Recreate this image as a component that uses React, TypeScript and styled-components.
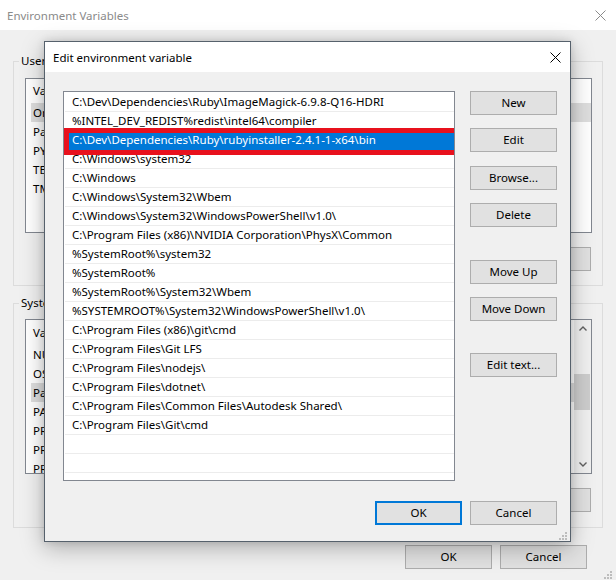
import React from "react";
import styled, { createGlobalStyle } from "styled-components";

const GlobalStyle = createGlobalStyle`
  html, body { margin: 0; padding: 0; background: #f0f0f0; }
  body {
    font-family: "Noto Sans", "Open Sans", sans-serif;
    font-size: 11.5px;
    color: #000;
  }
  *, *::before, *::after { box-sizing: border-box; }
`;

const Screen = styled.div`
  position: relative;
  width: 616px;
  height: 580px;
  overflow: hidden;
  display: flex;
  flex-direction: column;
`;

/* ---------- background window ---------- */

const BgTitleBar = styled.div`
  flex: none;
  height: 30px;
  background: #fff;
  display: flex;
  align-items: center;
  justify-content: space-between;
  padding: 0 10px 0 7px;
  color: #8a8a8a;
`;

const BgBody = styled.div`
  position: relative;
  flex: 1;
  background: #f0f0f0;
  padding: 31px 13px 0;
  display: flex;
  flex-direction: column;
`;

const Group = styled.div<{ $mt: number; $pt: number; $pb: number }>`
  position: relative;
  flex: none;
  height: 225px;
  margin-top: ${(p) => p.$mt}px;
  padding: ${(p) => p.$pt}px 10px ${(p) => p.$pb}px 11px;
  border: 1px solid #dcdcdc;
  display: flex;
  flex-direction: column;
`;

const GroupLabel = styled.span`
  position: absolute;
  top: -9px;
  left: 5px;
  padding: 0 2px;
  line-height: 16px;
  background: #f0f0f0;
`;

const ListView = styled.div`
  flex: none;
  height: 155px;
  border: 1px solid #828790;
  background: #fff;
  display: flex;
  overflow: hidden;
`;

const ListColumn = styled.div`
  flex: 1;
  display: flex;
  flex-direction: column;
  padding-left: 5px;
  overflow: hidden;
`;

const ListHeader = styled.div<{ $h: number }>`
  flex: none;
  height: ${(p) => p.$h}px;
  line-height: ${(p) => p.$h}px;
  padding-left: 2px;
  white-space: nowrap;
`;

const ListRow = styled.div<{ $selected?: boolean }>`
  flex: none;
  height: 19px;
  line-height: 19px;
  padding-left: 2px;
  white-space: nowrap;
  background: ${(p) => (p.$selected ? "#dedede" : "transparent")};
`;

const Scrollbar = styled.div`
  flex: none;
  width: 17px;
  background: #f0f0f0;
  display: flex;
  flex-direction: column;
`;

const ScrollArrow = styled.div`
  flex: none;
  height: 17px;
  display: flex;
  align-items: center;
  justify-content: center;
`;

const ScrollTrack = styled.div`
  flex: 1;
  padding: 37px 1px 0 0;
`;

const ScrollThumb = styled.div`
  height: 36px;
  background: #cdcdcd;
`;

const ButtonRow = styled.div<{ $mt: number; $pr: number }>`
  display: flex;
  justify-content: flex-end;
  gap: 8px;
  margin-top: ${(p) => p.$mt}px;
  padding-right: ${(p) => p.$pr}px;
`;

const Button = styled.button<{ $default?: boolean; $mt?: number }>`
  flex: none;
  width: 87px;
  height: 24px;
  margin-top: ${(p) => p.$mt ?? 0}px;
  padding: 0;
  background: #e1e1e1;
  border: ${(p) => (p.$default ? "2px solid #0078d7" : "1px solid #adadad")};
  font-family: inherit;
  font-size: 11.5px;
  color: #000;
  line-height: 20px;
  text-align: center;
`;

const Grip = styled.svg<{ $right: number; $bottom: number }>`
  position: absolute;
  right: ${(p) => p.$right}px;
  bottom: ${(p) => p.$bottom}px;
`;

/* ---------- edit dialog ---------- */

const Dialog = styled.div`
  position: absolute;
  left: 44px;
  top: 41px;
  width: 527px;
  height: 501px;
  border: 1px solid #56616c;
  background: #f0f0f0;
  display: flex;
  flex-direction: column;
  box-shadow: 0 6px 22px rgba(0, 0, 0, 0.28), 0 0 8px rgba(0, 0, 0, 0.12);
`;

const DialogTitleBar = styled.div`
  flex: none;
  height: 30px;
  background: #fff;
  display: flex;
  align-items: center;
  justify-content: space-between;
  padding: 0 9px 0 8px;
`;

const DialogBody = styled.div`
  position: relative;
  flex: 1;
  padding: 19px 13px 16px 18px;
  display: flex;
  flex-direction: column;
`;

const DialogContent = styled.div`
  flex: none;
  height: 390px;
  display: flex;
  gap: 15px;
`;

const PathList = styled.div`
  flex: none;
  width: 392px;
  height: 390px;
  border: 1px solid #828790;
  background: #fff;
  padding: 1px 0 0 1px;
  overflow: hidden;
  display: flex;
  flex-direction: column;
`;

const PathRow = styled.div<{ $selected?: boolean }>`
  position: relative;
  flex: none;
  height: 19px;
  line-height: 18px;
  padding-left: 7px;
  white-space: nowrap;
  border-bottom: 1px solid ${(p) => (p.$selected ? "#0078d7" : "#ececec")};
  background: ${(p) => (p.$selected ? "#0078d7" : "transparent")};
  color: ${(p) => (p.$selected ? "#fff" : "#000")};

  ${(p) =>
    p.$selected &&
    `
    &::after {
      content: "";
      position: absolute;
      left: -1px;
      top: -3px;
      width: 395px;
      height: 27px;
      border: 5px solid #e8111d;
      pointer-events: none;
    }
  `}
`;

const ButtonColumn = styled.div`
  flex: none;
  width: 87px;
  display: flex;
  flex-direction: column;
`;

const DialogFooter = styled.div`
  flex: none;
  margin-top: 20px;
  display: flex;
  justify-content: flex-end;
  gap: 8px;
`;

/* ---------- icons ---------- */

const CloseIcon = ({ color }: { color: string }) => (
  <svg width="11" height="11" viewBox="0 0 11 11">
    <path d="M0.5 0.5 L10.5 10.5 M10.5 0.5 L0.5 10.5" stroke={color} strokeWidth="1" fill="none" />
  </svg>
);

const Chevron = ({ up }: { up: boolean }) => (
  <svg width="8" height="5" viewBox="0 0 8 5">
    <path
      d={up ? "M0.5 4.5 L4 1 L7.5 4.5" : "M0.5 0.5 L4 4 L7.5 0.5"}
      stroke="#606060"
      strokeWidth="1.4"
      fill="none"
    />
  </svg>
);

const GripDots = ({ right, bottom }: { right: number; bottom: number }) => (
  <Grip $right={right} $bottom={bottom} width="8" height="8" viewBox="0 0 8 8">
    {[
      [6, 0],
      [3, 3],
      [6, 3],
      [0, 6],
      [3, 6],
      [6, 6],
    ].map(([x, y]) => (
      <rect key={`${x}-${y}`} x={x} y={y} width="2" height="2" fill="#bdbdbd" />
    ))}
  </Grip>
);

const userVars = ["OneDrive", "Path", "PYTHONPATH", "TEMP", "TMP"];
const systemVars = [
  "NUMBER_OF_PROCESSORS",
  "OS",
  "Path",
  "PATHEXT",
  "PROCESSOR_ARCHITECTURE",
  "PROCESSOR_IDENTIFIER",
  "PROCESSOR_LEVEL",
];

const paths = [
  "C:\\Dev\\Dependencies\\Ruby\\ImageMagick-6.9.8-Q16-HDRI",
  "%INTEL_DEV_REDIST%redist\\intel64\\compiler",
  "C:\\Dev\\Dependencies\\Ruby\\rubyinstaller-2.4.1-1-x64\\bin",
  "C:\\Windows\\system32",
  "C:\\Windows",
  "C:\\Windows\\System32\\Wbem",
  "C:\\Windows\\System32\\WindowsPowerShell\\v1.0\\",
  "C:\\Program Files (x86)\\NVIDIA Corporation\\PhysX\\Common",
  "%SystemRoot%\\system32",
  "%SystemRoot%",
  "%SystemRoot%\\System32\\Wbem",
  "%SYSTEMROOT%\\System32\\WindowsPowerShell\\v1.0\\",
  "C:\\Program Files (x86)\\git\\cmd",
  "C:\\Program Files\\Git LFS",
  "C:\\Program Files\\nodejs\\",
  "C:\\Program Files\\dotnet\\",
  "C:\\Program Files\\Common Files\\Autodesk Shared\\",
  "C:\\Program Files\\Git\\cmd",
  "",
  "",
  "",
];

const sideButtons: { label: string; mt: number }[] = [
  { label: "New", mt: 0 },
  { label: "Edit", mt: 13 },
  { label: "Browse...", mt: 14 },
  { label: "Delete", mt: 13 },
  { label: "Move Up", mt: 33 },
  { label: "Move Down", mt: 13 },
  { label: "Edit text...", mt: 32 },
];

export default function App() {
  return (
    <>
      <GlobalStyle />
      <Screen>
        <BgTitleBar>
          <span>Environment Variables</span>
          <CloseIcon color="#8a8a8a" />
        </BgTitleBar>
        <BgBody>
          <Group $mt={0} $pt={16} $pb={13}>
            <GroupLabel>User variables for Admin</GroupLabel>
            <ListView>
              <ListColumn>
                <ListHeader $h={24}>Variable</ListHeader>
                {userVars.map((v, i) => (
                  <ListRow key={v} $selected={i === 0}>
                    {v}
                  </ListRow>
                ))}
              </ListColumn>
            </ListView>
            <ButtonRow $mt={14} $pr={1}>
              <Button>New...</Button>
              <Button>Edit...</Button>
              <Button>Delete</Button>
            </ButtonRow>
          </Group>
          <Group $mt={17} $pt={15} $pb={14}>
            <GroupLabel>System variables</GroupLabel>
            <ListView>
              <ListColumn>
                <ListHeader $h={25}>Variable</ListHeader>
                {systemVars.map((v, i) => (
                  <ListRow key={v} $selected={i === 2}>
                    {v}
                  </ListRow>
                ))}
              </ListColumn>
              <Scrollbar>
                <ScrollArrow>
                  <Chevron up />
                </ScrollArrow>
                <ScrollTrack>
                  <ScrollThumb />
                </ScrollTrack>
                <ScrollArrow>
                  <Chevron up={false} />
                </ScrollArrow>
              </Scrollbar>
            </ListView>
            <ButtonRow $mt={14} $pr={1}>
              <Button>New...</Button>
              <Button>Edit...</Button>
              <Button>Delete</Button>
            </ButtonRow>
          </Group>
          <ButtonRow $mt={17} $pr={16}>
            <Button>OK</Button>
            <Button>Cancel</Button>
          </ButtonRow>
          <GripDots right={4} bottom={1} />
        </BgBody>

        <Dialog>
          <DialogTitleBar>
            <span>Edit environment variable</span>
            <CloseIcon color="#000" />
          </DialogTitleBar>
          <DialogBody>
            <DialogContent>
              <PathList>
                {paths.map((p, i) => (
                  <PathRow key={i} $selected={i === 2}>
                    {p}
                  </PathRow>
                ))}
              </PathList>
              <ButtonColumn>
                {sideButtons.map((b) => (
                  <Button key={b.label} $mt={b.mt}>
                    {b.label}
                  </Button>
                ))}
              </ButtonColumn>
            </DialogContent>
            <DialogFooter>
              <Button $default>OK</Button>
              <Button>Cancel</Button>
            </DialogFooter>
            <GripDots right={3} bottom={1} />
          </DialogBody>
        </Dialog>
      </Screen>
    </>
  );
}
